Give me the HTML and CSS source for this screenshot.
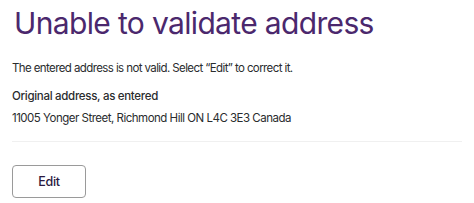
FILE: index.html
```html
<!DOCTYPE html>
<html lang="en">
<head>
    <meta charset="UTF-8">
    <meta name="viewport" content="width=device-width, initial-scale=1.0">
    <title>Unable to validate address</title>
    <link rel="stylesheet" href="styles.css">
</head>
<body>
    <div class="container">
        <h1>Unable to validate address</h1>
        <p class="message">The entered address is not valid. Select “Edit” to correct it.</p>
        <div class="address">
            <div class="address-label">Original address, as entered</div>
            <div class="address-value">11005 Yonger Street, Richmond Hill ON L4C 3E3 Canada</div>
        </div>
        <hr class="divider">
        <button class="edit-btn">Edit</button>
    </div>
</body>
</html>
```

FILE: styles.css
```css
:root {
    --purple: #4b286d;
    --text-color: #2a2c2e;
    --divider-color: #f0f0f0;
    --border-color: #9a9a9a;
}
body {
    font-family: Inter, 'Noto Sans', sans-serif;
    color: var(--text-color);
    background: #ffffff;
    margin: 0;
    padding: 0 12px;
}
.container {
    width: 100%;
}
h1 {
    color: var(--purple);
    font-size: 30px;
    font-weight: 400;
    letter-spacing: -0.65px;
    line-height: 40px;
    margin: 3px 0 0 2px;
}
.message {
    font-size: 11.5px;
    letter-spacing: -0.6px;
    line-height: 18px;
    margin: 16px 0 0;
}
.address {
    margin-top: 10px;
}
.address-label {
    font-size: 11.5px;
    letter-spacing: -0.3px;
    font-weight: 500;
    line-height: 18px;
}
.address-value {
    font-size: 11.5px;
    letter-spacing: -0.5px;
    line-height: 20px;
    margin-top: 3px;
}
.divider {
    border: none;
    border-top: 1px solid var(--divider-color);
    margin: 13px 0 0;
}
.edit-btn {
    margin-top: 23px;
    width: 74px;
    height: 33px;
    background: #ffffff;
    border: 1px solid var(--border-color);
    border-radius: 4px;
    font-family: inherit;
    font-size: 12.5px;
    font-weight: 500;
    letter-spacing: -0.3px;
    color: #2b1a40;
    cursor: pointer;
}
```
